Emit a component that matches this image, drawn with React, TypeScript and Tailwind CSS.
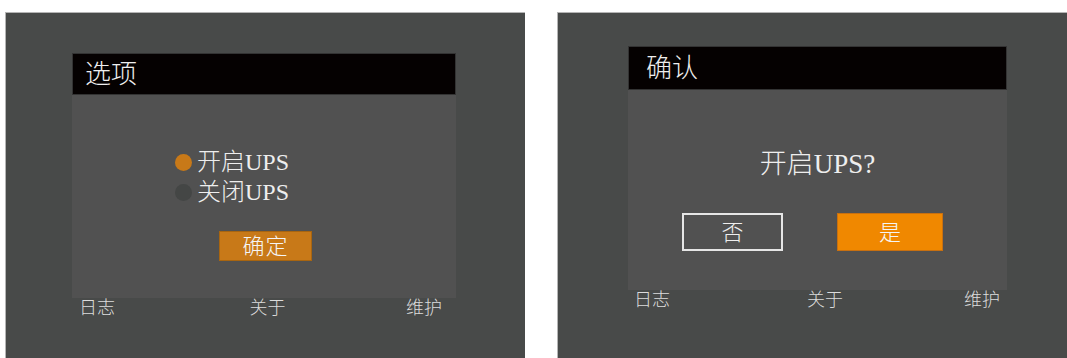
import React from "react";

const font = { fontFamily: '"Liberation Serif", "Noto Sans CJK SC", serif' };

function Footer({ left, right, mid }: { left: string; right: string; mid: string }) {
  return (
    <div className={`flex justify-between text-[18px] leading-[20px] text-[#dcdcdc] font-light ${left} ${right}`}>
      <span>日志</span>
      <span className={mid}>关于</span>
      <span>维护</span>
    </div>
  );
}

export default function App() {
  return (
    <div className="w-[1067px] h-[358px] bg-white flex overflow-hidden" style={font}>
      {/* Left panel */}
      <div className="ml-[5px] mt-[12px] w-[520px] h-[346px] bg-[#484a49] border-t border-l border-[#b5b5b5] pl-[66px] pt-[40px]">
        <div className="w-[384px]">
          <div className="h-[42px] bg-[#050101] border border-[#333] flex items-center pl-[12px] text-[26px] text-[#eeeeee] font-light">
            选项
          </div>
          <div className="h-[203px] bg-[#515151] flex flex-col pt-[52px]">
            <div className="ml-[103px] flex flex-col text-[24px] leading-[30px] text-[#eeeeee] font-light">
              <div className="flex items-center">
                <span className="w-[17px] h-[17px] rounded-full bg-[#c87918] mr-[5px]" />
                <span>开启UPS</span>
              </div>
              <div className="flex items-center">
                <span className="w-[17px] h-[17px] rounded-full bg-[#444645] mr-[5px]" />
                <span>关闭UPS</span>
              </div>
            </div>
            <div className="ml-[147px] mt-[24px] w-[93px] h-[30px] bg-[#c87918] border border-[#a86510] flex items-center justify-center text-[22px] text-[#f5f5f5] tracking-[1px] font-light">
              确定
            </div>
          </div>
          <Footer left="pl-[7px]" right="pr-[14px]" mid="ml-[14px]" />
        </div>
      </div>

      {/* Right panel */}
      <div className="ml-[32px] mt-[12px] w-[510px] h-[346px] bg-[#484a49] border-t border-l border-[#b5b5b5] pl-[70px] pt-[33px]">
        <div className="w-[379px]">
          <div className="h-[44px] bg-[#050101] border border-[#333] flex items-center pl-[17px] text-[26px] text-[#eeeeee] font-light">
            确认
          </div>
          <div className="h-[200px] bg-[#515151] flex flex-col items-center pt-[58px]">
            <div className="text-[27px] leading-[32px] text-[#eeeeee] font-light">开启UPS?</div>
            <div className="flex w-full mt-[33px]">
              <div className="ml-[54px] w-[101px] h-[38px] border-2 border-[#e6e6e6] flex items-center justify-center text-[22px] text-[#eeeeee] font-light">
                否
              </div>
              <div className="ml-[54px] w-[106px] h-[38px] bg-[#f08800] border border-[#c87010] flex items-center justify-center text-[22px] text-[#f5f5f5] font-light">
                是
              </div>
            </div>
          </div>
          <Footer left="pl-[6px]" right="pr-[7px]" mid="ml-[16px]" />
        </div>
      </div>
    </div>
  );
}
